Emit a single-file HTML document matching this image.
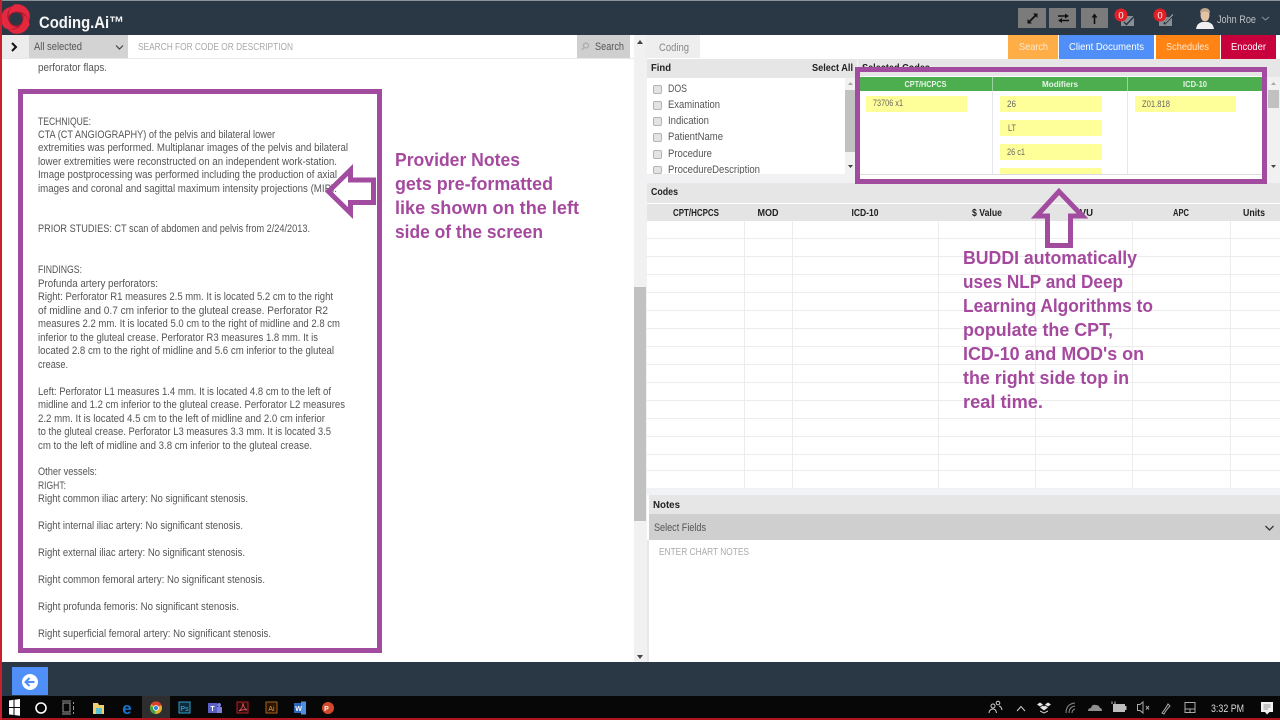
<!DOCTYPE html>
<html><head><meta charset="utf-8"><title>Coding.Ai</title>
<style>
html,body{margin:0;padding:0;width:1280px;height:720px;overflow:hidden;background:#fff}
svg{display:block}
text{font-family:"Liberation Sans",sans-serif}
.n{font-size:10.8px;fill:#555}
.p{font-size:18px;font-weight:bold;fill:#a5499f}
.w{font-size:10.5px;fill:#fff}
.l{font-size:10.8px;fill:#555}
.b{font-size:10.5px;font-weight:bold;fill:#222}
.y{font-size:9.5px;fill:#666}
</style></head><body>
<svg width="1280" height="720" viewBox="0 0 1280 720" xmlns="http://www.w3.org/2000/svg">
<rect width="1280" height="720" fill="#fff"/>
<!-- header -->
<rect x="0" y="0" width="1280" height="35" fill="#2a3744"/>
<rect x="0" y="0" width="1280" height="1" fill="#8a929a"/>
<!-- logo -->
<circle cx="16" cy="19" r="10" fill="none" stroke="#a8182a" stroke-width="7"/>
<g fill="#e3283f">
<path id="pet" d="M14 4.500 Q25 3 29.500 13 Q30.500 17 29 21 Q26 12 17.500 11.500 Q11 11.500 8.500 16 Q8 9 14 4.500 Z"/>
<path d="M14 4.500 Q25 3 29.500 13 Q30.500 17 29 21 Q26 12 17.500 11.500 Q11 11.500 8.500 16 Q8 9 14 4.500 Z" transform="rotate(120 16 19)"/>
<path d="M14 4.500 Q25 3 29.500 13 Q30.500 17 29 21 Q26 12 17.500 11.500 Q11 11.500 8.500 16 Q8 9 14 4.500 Z" transform="rotate(240 16 19)"/>
</g>
<circle cx="16" cy="19" r="5.500" fill="#2a3744"/>
<text x="39" y="28" font-size="16.500" font-weight="bold" fill="#f4f5f6" textLength="85" lengthAdjust="spacingAndGlyphs">Coding.Ai™</text>
<rect x="1018" y="8" width="28" height="20" fill="#7b7b7b"/>
<rect x="1049" y="8" width="27" height="20" fill="#7b7b7b"/>
<rect x="1081" y="8" width="27" height="20" fill="#7b7b7b"/>
<path d="M1029.500 21.500 L1035.500 15.500" stroke="#111" stroke-width="1.800" fill="none"/>
<path d="M1037.500 13.500 V18 L1033 13.500 Z M1027.500 23.500 V19 L1032 23.500 Z" fill="#111"/>
<path d="M1058 16 H1066 M1061 20.500 H1069" stroke="#111" stroke-width="1.600" fill="none"/>
<path d="M1065 13.500 L1069 16 L1065 18.500 Z M1062 18 L1058 20.500 L1062 23 Z" fill="#111"/>
<path d="M1094.500 24 V16" stroke="#111" stroke-width="1.600" fill="none"/>
<path d="M1091.500 17.500 L1094.500 13.500 L1097.500 17.500 Z" fill="#111"/>
<path d="M1121 16 H1134 V26 H1121 Z" fill="#8a8f93"/>
<path d="M1124 22 L1126.500 24.500 L1135 15.500" stroke="#2a3744" stroke-width="1.500" fill="none"/>
<circle cx="1121" cy="15" r="6.500" fill="#e01f26"/>
<text x="1121" y="18.500" font-size="9.500" fill="#fff" text-anchor="middle">0</text>
<path d="M1159 17 H1172 V26 H1159 Z" fill="#8a8f93"/>
<path d="M1164 24 L1174 14" stroke="#2a3744" stroke-width="2.500" fill="none"/>
<path d="M1165 22.500 L1173 14.500" stroke="#aeb2b5" stroke-width="1" fill="none"/>
<circle cx="1160" cy="15" r="6.500" fill="#e01f26"/>
<text x="1160" y="18.500" font-size="9.500" fill="#fff" text-anchor="middle">0</text>
<path d="M1196 29 Q1197 23 1202 22 L1208 22 Q1213 23 1214 29 Z" fill="#f0f0f0"/>
<ellipse cx="1205" cy="15" rx="4.500" ry="6.500" fill="#e3c3a6"/>
<path d="M1200 13 Q1200 8 1205 8 Q1210 8 1210 13 Q1205 10 1200 13 Z" fill="#bda68c"/>
<text x="1217" y="23" font-size="11" fill="#bcc2c7" textLength="39" lengthAdjust="spacingAndGlyphs">John Roe</text>
<path d="M1262 17 L1265.500 20 L1269 17" stroke="#8f979e" fill="none"/>
<!-- left toolbar -->
<rect x="2" y="35" width="27" height="24" fill="#ececec"/>
<path d="M12 43 L16 47 L12 51" stroke="#111" stroke-width="2" fill="none"/>
<rect x="29" y="35" width="99" height="24" fill="#d3d3d3"/>
<text class="l" x="34" y="50" textLength="48" lengthAdjust="spacingAndGlyphs">All selected</text>
<path d="M116 45.500 L119.500 49 L123 45.500" stroke="#444" stroke-width="1.200" fill="none"/>
<text x="138" y="50" font-size="10.500" fill="#aaa" textLength="155" lengthAdjust="spacingAndGlyphs">SEARCH FOR CODE OR DESCRIPTION</text>
<rect x="577" y="35" width="53" height="24" fill="#cfcfcf"/>
<circle cx="586" cy="45.500" r="2.500" fill="none" stroke="#aaa" stroke-width="1.200"/>
<path d="M584 47.500 L582 50" stroke="#aaa" stroke-width="1.200"/>
<text class="l" x="595" y="50" textLength="29" lengthAdjust="spacingAndGlyphs">Search</text>
<rect x="2" y="58" width="632" height="1" fill="#e8e8e8"/>
<!-- left notes text -->
<text class="n" x="38" y="71" textLength="69" lengthAdjust="spacingAndGlyphs">perforator flaps.</text>
<text class="n" x="38" y="125" textLength="53" lengthAdjust="spacingAndGlyphs">TECHNIQUE:</text>
<text class="n" x="38" y="138" textLength="237" lengthAdjust="spacingAndGlyphs">CTA (CT ANGIOGRAPHY) of the pelvis and bilateral lower</text>
<text class="n" x="38" y="151" textLength="310" lengthAdjust="spacingAndGlyphs">extremities was performed. Multiplanar images of the pelvis and bilateral</text>
<text class="n" x="38" y="165" textLength="299" lengthAdjust="spacingAndGlyphs">lower extremities were reconstructed on an independent work-station.</text>
<text class="n" x="38" y="178" textLength="299" lengthAdjust="spacingAndGlyphs">Image postprocessing was performed including the production of axial</text>
<text class="n" x="38" y="192" textLength="299" lengthAdjust="spacingAndGlyphs">images and coronal and sagittal maximum intensity projections (MIP).</text>
<text class="n" x="38" y="232" textLength="272" lengthAdjust="spacingAndGlyphs">PRIOR STUDIES: CT scan of abdomen and pelvis from 2/24/2013.</text>
<text class="n" x="38" y="273" textLength="44" lengthAdjust="spacingAndGlyphs">FINDINGS:</text>
<text class="n" x="38" y="287" textLength="120" lengthAdjust="spacingAndGlyphs">Profunda artery perforators:</text>
<text class="n" x="38" y="300" textLength="295" lengthAdjust="spacingAndGlyphs">Right: Perforator R1 measures 2.5 mm. It is located 5.2 cm to the right</text>
<text class="n" x="38" y="314" textLength="290" lengthAdjust="spacingAndGlyphs">of midline and 0.7 cm inferior to the gluteal crease. Perforator R2</text>
<text class="n" x="38" y="327" textLength="302" lengthAdjust="spacingAndGlyphs">measures 2.2 mm. It is located 5.0 cm to the right of midline and 2.8 cm</text>
<text class="n" x="38" y="341" textLength="280" lengthAdjust="spacingAndGlyphs">inferior to the gluteal crease. Perforator R3 measures 1.8 mm. It is</text>
<text class="n" x="38" y="354" textLength="296" lengthAdjust="spacingAndGlyphs">located 2.8 cm to the right of midline and 5.6 cm inferior to the gluteal</text>
<text class="n" x="38" y="368" textLength="30" lengthAdjust="spacingAndGlyphs">crease.</text>
<text class="n" x="38" y="395" textLength="293" lengthAdjust="spacingAndGlyphs">Left: Perforator L1 measures 1.4 mm. It is located 4.8 cm to the left of</text>
<text class="n" x="38" y="408" textLength="307" lengthAdjust="spacingAndGlyphs">midline and 1.2 cm inferior to the gluteal crease. Perforator L2 measures</text>
<text class="n" x="38" y="422" textLength="287" lengthAdjust="spacingAndGlyphs">2.2 mm. It is located 4.5 cm to the left of midline and 2.0 cm inferior</text>
<text class="n" x="38" y="435" textLength="293" lengthAdjust="spacingAndGlyphs">to the gluteal crease. Perforator L3 measures 3.3 mm. It is located 3.5</text>
<text class="n" x="38" y="449" textLength="274" lengthAdjust="spacingAndGlyphs">cm to the left of midline and 3.8 cm inferior to the gluteal crease.</text>
<text class="n" x="38" y="475" textLength="59" lengthAdjust="spacingAndGlyphs">Other vessels:</text>
<text class="n" x="38" y="489" textLength="28" lengthAdjust="spacingAndGlyphs">RIGHT:</text>
<text class="n" x="38" y="502" textLength="210" lengthAdjust="spacingAndGlyphs">Right common iliac artery: No significant stenosis.</text>
<text class="n" x="38" y="529" textLength="205" lengthAdjust="spacingAndGlyphs">Right internal iliac artery: No significant stenosis.</text>
<text class="n" x="38" y="556" textLength="207" lengthAdjust="spacingAndGlyphs">Right external iliac artery: No significant stenosis.</text>
<text class="n" x="38" y="583" textLength="227" lengthAdjust="spacingAndGlyphs">Right common femoral artery: No significant stenosis.</text>
<text class="n" x="38" y="610" textLength="201" lengthAdjust="spacingAndGlyphs">Right profunda femoris: No significant stenosis.</text>
<text class="n" x="38" y="637" textLength="233" lengthAdjust="spacingAndGlyphs">Right superficial femoral artery: No significant stenosis.</text>
<!-- mid scrollbar -->
<rect x="634" y="35" width="13" height="627" fill="#f1f1f1"/>
<rect x="634" y="287" width="12" height="234" fill="#c1c1c1"/>
<path d="M637 44 L640 40 L643 44 Z" fill="#444"/>
<path d="M637 655 L640 659 L643 655 Z" fill="#444"/>
<!-- right tabs -->
<rect x="646" y="35" width="54" height="23" fill="#eeeeee"/>
<text class="l" x="659" y="51" textLength="30" lengthAdjust="spacingAndGlyphs" style="fill:#888">Coding</text>
<rect x="1008" y="35" width="50" height="24" fill="#ffad46"/>
<text class="w" x="1019" y="50" textLength="29" lengthAdjust="spacingAndGlyphs" style="fill:#fbe9cf">Search</text>
<rect x="1059" y="35" width="95" height="24" fill="#4f8ff7"/>
<text class="w" x="1069" y="50" textLength="75" lengthAdjust="spacingAndGlyphs">Client Documents</text>
<rect x="1156" y="35" width="64" height="24" fill="#ff8413"/>
<text class="w" x="1166" y="50" textLength="43" lengthAdjust="spacingAndGlyphs" style="fill:#fde8d3">Schedules</text>
<rect x="1221" y="35" width="55" height="24" fill="#c8003c"/>
<text class="w" x="1231" y="50" textLength="35" lengthAdjust="spacingAndGlyphs">Encoder</text>
<!-- find / selected header -->
<rect x="647" y="59" width="633" height="19" fill="#e6e6e6"/>
<rect x="857" y="60" width="1" height="18" fill="#f4f4f4"/>
<text class="b" x="651" y="71" textLength="20" lengthAdjust="spacingAndGlyphs">Find</text>
<text class="b" x="812" y="71" textLength="41" lengthAdjust="spacingAndGlyphs">Select All</text>
<text class="b" x="862" y="71" textLength="68" lengthAdjust="spacingAndGlyphs">Selected Codes</text>
<!-- find list -->
<rect x="647" y="78" width="198" height="96" fill="#fff"/>
<g fill="#e4e4e4" stroke="#b4b4b4" stroke-width="1">
<rect x="653.500" y="85.500" width="8" height="8" rx="1.500"/>
<rect x="653.500" y="101.500" width="8" height="8" rx="1.500"/>
<rect x="653.500" y="117.500" width="8" height="8" rx="1.500"/>
<rect x="653.500" y="133.500" width="8" height="8" rx="1.500"/>
<rect x="653.500" y="150.500" width="8" height="8" rx="1.500"/>
<rect x="653.500" y="166.500" width="8" height="7" rx="1.500"/>
</g>
<text class="l" x="668" y="92" textLength="19" lengthAdjust="spacingAndGlyphs">DOS</text>
<text class="l" x="668" y="108" textLength="52" lengthAdjust="spacingAndGlyphs">Examination</text>
<text class="l" x="668" y="124" textLength="41" lengthAdjust="spacingAndGlyphs">Indication</text>
<text class="l" x="668" y="140" textLength="55" lengthAdjust="spacingAndGlyphs">PatientName</text>
<text class="l" x="668" y="157" textLength="44" lengthAdjust="spacingAndGlyphs">Procedure</text>
<text class="l" x="668" y="173" textLength="92" lengthAdjust="spacingAndGlyphs">ProcedureDescription</text>
<rect x="845" y="78" width="11" height="96" fill="#f1f1f1"/>
<rect x="845" y="90" width="11" height="62" fill="#c1c1c1"/>
<path d="M848 85 L850.500 82 L853 85 Z" fill="#aaa"/>
<path d="M848 165 L850.500 168 L853 165 Z" fill="#444"/>
<rect x="647" y="174" width="633" height="9" fill="#f1f1f3"/>
<!-- selected codes -->
<rect x="858" y="76" width="409" height="104" fill="#fff"/>
<rect x="859" y="77" width="404" height="14" fill="#4cae4f"/>
<rect x="992" y="77" width="1" height="14" fill="#9ed19f"/>
<rect x="1127" y="77" width="1" height="14" fill="#9ed19f"/>
<rect x="992" y="91" width="1" height="83" fill="#e4e8ee"/>
<rect x="1127" y="91" width="1" height="83" fill="#e4e8ee"/>
<rect x="859" y="174" width="404" height="1" fill="#ddd"/>
<text x="925.500" y="87" font-size="8.500" font-weight="bold" fill="#e8f5e8" text-anchor="middle" textLength="42" lengthAdjust="spacingAndGlyphs">CPT/HCPCS</text>
<text x="1060" y="87" font-size="8.500" font-weight="bold" fill="#e8f5e8" text-anchor="middle" textLength="36" lengthAdjust="spacingAndGlyphs">Modifiers</text>
<text x="1195" y="87" font-size="8.500" font-weight="bold" fill="#e8f5e8" text-anchor="middle" textLength="24" lengthAdjust="spacingAndGlyphs">ICD-10</text>
<g fill="#ffff99">
<rect x="866" y="96" width="101" height="16"/>
<rect x="1000" y="96" width="102" height="16"/>
<rect x="1000" y="120" width="102" height="16"/>
<rect x="1000" y="144" width="102" height="16"/>
<rect x="1000" y="168" width="102" height="6"/>
<rect x="1135" y="96" width="101" height="16"/>
</g>
<text class="y" x="873" y="106" textLength="30" lengthAdjust="spacingAndGlyphs">73706 x1</text>
<text class="y" x="1007" y="107" textLength="9" lengthAdjust="spacingAndGlyphs">26</text>
<text class="y" x="1008" y="131" textLength="8" lengthAdjust="spacingAndGlyphs">LT</text>
<text class="y" x="1007" y="155" textLength="18" lengthAdjust="spacingAndGlyphs">26 c1</text>
<text class="y" x="1142" y="107" textLength="28" lengthAdjust="spacingAndGlyphs">Z01.818</text>
<rect x="1267" y="77" width="13" height="97" fill="#f1f1f1"/>
<rect x="1268" y="90" width="11" height="18" fill="#c1c1c1"/>
<path d="M1271 85 L1273.500 82 L1276 85 Z" fill="#aaa"/>
<path d="M1271 165 L1273.500 168 L1276 165 Z" fill="#444"/>
<!-- codes -->
<rect x="647" y="183" width="633" height="20" fill="#e6e6e6"/>
<text class="b" x="651" y="195" textLength="27" lengthAdjust="spacingAndGlyphs">Codes</text>
<rect x="647" y="204" width="633" height="17" fill="#e4e4e4"/>
<text class="b" x="696" y="216" text-anchor="middle" textLength="46" lengthAdjust="spacingAndGlyphs">CPT/HCPCS</text>
<text class="b" x="768" y="216" text-anchor="middle" textLength="21" lengthAdjust="spacingAndGlyphs">MOD</text>
<text class="b" x="865" y="216" text-anchor="middle" textLength="27" lengthAdjust="spacingAndGlyphs">ICD-10</text>
<text class="b" x="987" y="216" text-anchor="middle" textLength="30" lengthAdjust="spacingAndGlyphs">$ Value</text>
<text class="b" x="1073" y="216" textLength="20" lengthAdjust="spacingAndGlyphs">RVU</text>
<rect x="1070" y="206" width="10" height="12" fill="#e4e4e4"/>
<text class="b" x="1181" y="216" text-anchor="middle" textLength="16" lengthAdjust="spacingAndGlyphs">APC</text>
<text class="b" x="1254" y="216" text-anchor="middle" textLength="22" lengthAdjust="spacingAndGlyphs">Units</text>
<g fill="#ececec">
<rect x="647" y="238" width="633" height="1"/><rect x="647" y="256" width="633" height="1"/>
<rect x="647" y="274" width="633" height="1"/><rect x="647" y="292" width="633" height="1"/>
<rect x="647" y="310" width="633" height="1"/><rect x="647" y="328" width="633" height="1"/>
<rect x="647" y="346" width="633" height="1"/><rect x="647" y="364" width="633" height="1"/>
<rect x="647" y="382" width="633" height="1"/><rect x="647" y="400" width="633" height="1"/>
<rect x="647" y="418" width="633" height="1"/><rect x="647" y="436" width="633" height="1"/>
<rect x="647" y="454" width="633" height="1"/><rect x="647" y="470" width="633" height="1"/>
<rect x="744" y="221" width="1" height="267"/><rect x="792" y="221" width="1" height="267"/>
<rect x="938" y="221" width="1" height="267"/><rect x="1035" y="221" width="1" height="267"/>
<rect x="1132" y="221" width="1" height="267"/><rect x="1230" y="221" width="1" height="267"/>
</g>
<rect x="647" y="488" width="633" height="7" fill="#f1f2f5"/>
<!-- notes -->
<rect x="649" y="495" width="631" height="19" fill="#e6e6e6"/>
<text class="b" x="653" y="508" textLength="27" lengthAdjust="spacingAndGlyphs">Notes</text>
<rect x="649" y="514" width="631" height="26" fill="#cfcfcf"/>
<text class="l" x="654" y="531" textLength="52" lengthAdjust="spacingAndGlyphs">Select Fields</text>
<path d="M1265.500 526 L1269.500 530 L1273.500 526" stroke="#333" stroke-width="1.300" fill="none"/>
<text x="659" y="555" font-size="10.500" fill="#aaa" textLength="90" lengthAdjust="spacingAndGlyphs">ENTER CHART NOTES</text>
<rect x="647" y="540" width="2" height="122" fill="#e6e8ec"/>
<!-- purple annotations -->
<rect x="20.500" y="91.500" width="359" height="559" fill="none" stroke="#a24c9f" stroke-width="5"/>
<rect x="857.500" y="69.500" width="407" height="112" fill="none" stroke="#a24c9f" stroke-width="5"/>
<path d="M328.500 191.500 L350.500 170 V180 H373.500 V202.500 H350.500 V213 Z" fill="none" stroke="#a24c9f" stroke-width="5"/>
<path d="M1059 191.500 L1036.500 216 H1047.500 V245.500 H1070.500 V216 H1082.500 Z" fill="none" stroke="#a24c9f" stroke-width="5"/>
<text class="p" x="395" y="166" textLength="125" lengthAdjust="spacingAndGlyphs">Provider Notes</text>
<text class="p" x="395" y="190" textLength="158" lengthAdjust="spacingAndGlyphs">gets pre-formatted</text>
<text class="p" x="395" y="214" textLength="184" lengthAdjust="spacingAndGlyphs">like shown on the left</text>
<text class="p" x="395" y="238" textLength="148" lengthAdjust="spacingAndGlyphs">side of the screen</text>
<text class="p" x="963" y="264" textLength="174" lengthAdjust="spacingAndGlyphs">BUDDI automatically</text>
<text class="p" x="963" y="288" textLength="160" lengthAdjust="spacingAndGlyphs">uses NLP and Deep</text>
<text class="p" x="963" y="312" textLength="190" lengthAdjust="spacingAndGlyphs">Learning Algorithms to</text>
<text class="p" x="963" y="336" textLength="150" lengthAdjust="spacingAndGlyphs">populate the CPT,</text>
<text class="p" x="963" y="360" textLength="181" lengthAdjust="spacingAndGlyphs">ICD-10 and MOD's on</text>
<text class="p" x="963" y="384" textLength="166" lengthAdjust="spacingAndGlyphs">the right side top in</text>
<text class="p" x="963" y="408" textLength="80" lengthAdjust="spacingAndGlyphs">real time.</text>
<!-- bottom bar -->
<rect x="0" y="662" width="1280" height="34" fill="#2a3744"/>
<rect x="12" y="667" width="36" height="28" fill="#4f8ff7"/>
<circle cx="30" cy="682" r="8" fill="#fff"/>
<path d="M34.500 682 H26 M29.500 678 L25.500 682 L29.500 686" stroke="#4f8ff7" stroke-width="2" fill="none"/>
<!-- taskbar -->
<rect x="0" y="696" width="1280" height="22" fill="#070707"/>
<rect x="0" y="718" width="1280" height="2" fill="#b0141e"/>
<rect x="0" y="0" width="2" height="720" fill="#c8202f"/>
<path d="M9 700.500 L13.500 699.800 V707 H9 Z M14.500 699.700 L20 699 V707 H14.500 Z M9 708 H13.500 V715 L9 714.400 Z M14.500 708 H20 V715.800 L14.500 715.100 Z" fill="#fff"/>
<circle cx="41" cy="708" r="5" fill="none" stroke="#fff" stroke-width="1.600"/>
<path d="M63 703 H70 V712 H63 Z M62 701 H71 M62 714 H71 M73.500 702 V704 M73.500 706 V710 M73.500 712 V714" stroke="#9a9a9a" fill="none"/>
<path d="M93 703 H98 L99 705 H104 V714 H93 Z" fill="#f2cf6c"/><rect x="96" y="708" width="6" height="6" fill="#5cc0d5"/>
<text x="127" y="714" font-size="17" font-weight="bold" fill="#1576d2" text-anchor="middle">e</text>
<rect x="142" y="696" width="28" height="22" fill="#2e2e2e"/>
<circle cx="156" cy="708" r="6" fill="#e0b32c"/><path d="M156 708 L151 704 A6 6 0 0 1 161.500 705 Z" fill="#d9412f"/><path d="M156 708 L150.500 706 A6 6 0 0 0 155 714 Z" fill="#3da34b"/><circle cx="156" cy="708" r="2.500" fill="#3c7fe0" stroke="#fff" stroke-width=".8"/>
<rect x="179" y="702" width="11" height="11" fill="#0e2c3c" stroke="#2e9fc9"/>
<text x="184.500" y="711" font-size="7" fill="#46b6e6" text-anchor="middle">Ps</text>
<rect x="208" y="703" width="9" height="10" fill="#5a5fc4"/><circle cx="219" cy="705" r="2" fill="#7b80d8"/><rect x="217" y="707" width="5" height="6" fill="#7b80d8"/>
<text x="212.500" y="711" font-size="7" font-weight="bold" fill="#fff" text-anchor="middle">T</text>
<rect x="237" y="702" width="11" height="11" fill="#2a0a0c" stroke="#b32025"/>
<path d="M239 711 Q243 708 243 703 Q243.500 708 247 710 Q242 709 239 711 Z" fill="none" stroke="#e25d5f" stroke-width=".8"/>
<rect x="266" y="702" width="11" height="11" fill="#2a1505" stroke="#a8641a"/>
<text x="271.500" y="711" font-size="7" fill="#e89a2f" text-anchor="middle">Ai</text>
<rect x="294" y="703" width="12" height="10" fill="#2b66bd"/><rect x="301" y="701.500" width="5" height="13" fill="#4f8fe0"/>
<text x="298.500" y="711" font-size="7" font-weight="bold" fill="#fff" text-anchor="middle">W</text>
<circle cx="328" cy="708" r="6" fill="#d2492a"/>
<text x="326.500" y="711" font-size="7" font-weight="bold" fill="#fff" text-anchor="middle">P</text>
<!-- tray -->
<g stroke="#cfcfcf" fill="none" stroke-width="1">
<circle cx="993" cy="706" r="2"/><path d="M989 713 Q989.500 709 993 709 Q996 709 996.500 713"/>
<circle cx="998" cy="703" r="1.800"/><path d="M999 706 Q1001.500 706.500 1002 710"/>
<path d="M1017 711 L1021 706.500 L1025 711"/>
<path d="M1066 713 Q1066 704 1075 703 M1069 713 Q1069 707 1075 706 M1072 713 Q1072 710 1075 709" stroke="#8a8a8a"/>
<path d="M1140 704.500 H1137.500 V710.500 H1140 L1143 713 V702 Z" stroke="#aaa"/>
<path d="M1146 706 L1149 709.500 M1149 706 L1146 709.500" stroke="#aaa"/>
<path d="M1162 713 Q1166 708 1168 704 L1170 706 Q1166 710 1164 714 Z" stroke="#aaa"/>
<rect x="1185" y="702.500" width="10" height="10" stroke="#aaa"/><path d="M1185 709 H1195 M1190 709 V712.500" stroke="#aaa"/>
</g>
<path d="M1040 703 L1043 705 L1040 707 L1037 705 Z M1048 703 L1051 705 L1048 707 L1045 705 Z M1040 708 L1043 706 L1044 707 L1045 706 L1048 708 L1044 711 Z M1040 711 L1044 713 L1048 711 V712 L1044 714 L1040 712 Z" fill="#e6e6e6" transform="translate(0,-.5)"/>
<path d="M1088 711 Q1088 708 1091 708 Q1092 704 1096 705 Q1099 705 1100 708 Q1102 708 1102 711 Z" fill="#8f8f8f"/>
<rect x="1113" y="704" width="12" height="8" fill="#bdbdbd"/><rect x="1125" y="706" width="1.500" height="4" fill="#bdbdbd"/>
<path d="M1112 701.500 V704 M1115 701.500 V704" stroke="#bbb"/>
<text x="1211" y="712" font-size="11" fill="#d8d8d8" textLength="33" lengthAdjust="spacingAndGlyphs">3:32 PM</text>
<path d="M1261 702 H1273 V712 H1269.500 L1267 714.500 L1265 712 H1261 Z" fill="#f0f0f0"/>
<path d="M1263.500 705 H1270.500 M1263.500 707 H1270.500 M1263.500 709 H1268" stroke="#777" stroke-width=".7"/>
</svg>
</body></html>
